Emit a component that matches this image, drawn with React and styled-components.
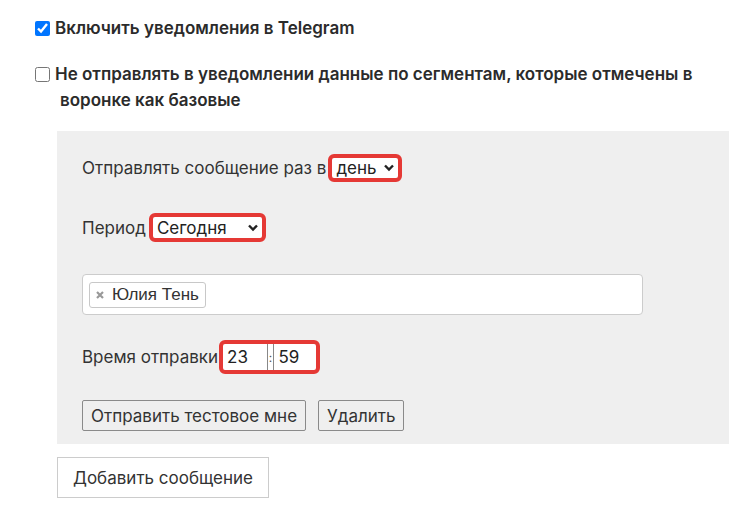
import React from "react";
import styled, { createGlobalStyle } from "styled-components";

const GlobalStyle = createGlobalStyle`
    body {
        margin: 0;
        background: #fff;
        font-family: Inter, "Noto Sans", sans-serif;
        color: #333;
    }
`;

const Page = styled.div`
    padding: 15px 0 0 35px;
    width: 694px;
`;

const CheckRow = styled.label`
    display: flex;
    align-items: flex-start;
    gap: 5px;
    font-size: 17px;
    font-weight: 600;
    line-height: 26px;
    color: #2b2b2b;
    margin-bottom: ${({ $gap }) => $gap || 0}px;
`;

const Box = styled.input`
    width: 15px;
    height: 15px;
    margin: 6px 0 0 0;
    flex: none;
`;

const CheckText = styled.span`
    max-width: 655px;
    padding-left: 5px;
    text-indent: -5px;
`;

const Panel = styled.div`
    margin: 18px 0 0 22px;
    width: 672px;
    background: #efefef;
    padding: 23px 0 13px 25px;
    box-sizing: border-box;
`;

const Row = styled.div`
    display: flex;
    align-items: center;
    gap: ${({ $space }) => $space || 3}px;
    font-size: 17px;
    color: #333;
    margin-bottom: ${({ $gap }) => $gap || 0}px;
`;

const Highlight = styled.div`
    display: flex;
    align-items: center;
    border: 4px solid #e53935;
    border-radius: 6px;
    background: #fff;
    height: ${({ $h }) => $h || 28}px;
    width: ${({ $w }) => $w}px;
    box-sizing: border-box;
    flex: none;
`;

const SelectText = styled.span`
    flex: 1;
    padding-left: 4px;
    font-size: 17px;
    color: #222;
`;

const Chevron = () => (
    <svg width="12" height="12" viewBox="0 0 12 12" style={{ marginRight: 3 }}>
        <path d="M2 3.5 L6 7.5 L10 3.5" fill="none" stroke="#222" strokeWidth="2.4" />
    </svg>
);

const TagsBox = styled.div`
    width: 561px;
    height: 41px;
    box-sizing: border-box;
    background: #fff;
    border: 1px solid #ccc;
    border-radius: 4px;
    padding: 7px 6px;
    display: flex;
    margin-bottom: 25px;
`;

const Tag = styled.div`
    display: flex;
    align-items: center;
    gap: 8px;
    height: 26px;
    box-sizing: border-box;
    border: 1px solid #c8c8c8;
    border-radius: 3px;
    padding: 0 6px 0 6px;
    font-family: "Liberation Sans", Arial, sans-serif;
    font-size: 17px;
    color: #333;
`;

const CrossIcon = () => (
    <svg width="8" height="8" viewBox="0 0 8 8">
        <path d="M1 1 L7 7 M7 1 L1 7" stroke="#999" strokeWidth="2.2" />
    </svg>
);

const TimeField = styled.span`
    width: ${({ $w }) => $w}px;
    padding-left: 4px;
    font-size: 17px;
    color: #222;
    box-sizing: border-box;
`;

const Colon = styled.span`
    width: 6px;
    align-self: stretch;
    border-left: 1px solid #888;
    border-right: 1px solid #888;
    display: flex;
    align-items: center;
    justify-content: center;
    font-size: 12px;
    color: #555;
`;

const Buttons = styled.div`
    display: flex;
    gap: 12px;
`;

const Btn = styled.button`
    font-family: Inter, "Noto Sans", sans-serif;
    font-size: 17px;
    color: #333;
    background: ${({ $white }) => ($white ? "#fff" : "transparent")};
    border: 1px solid ${({ $white }) => ($white ? "#ccc" : "#8a8a8a")};
    border-radius: ${({ $white }) => ($white ? 0 : 2)}px;
    height: ${({ $white }) => ($white ? 41 : 31)}px;
    padding: 0 ${({ $white }) => ($white ? 15 : 8)}px;
    cursor: pointer;
`;

const Footer = styled.div`
    margin: 13px 0 0 22px;
`;

export default function App() {
    return (
        <>
            <GlobalStyle />
            <Page>
                <CheckRow $gap={20}>
                    <Box type="checkbox" defaultChecked />
                    <CheckText>Включить уведомления в Telegram</CheckText>
                </CheckRow>
                <CheckRow>
                    <Box type="checkbox" />
                    <CheckText>
                        Не отправлять в уведомлении данные по сегментам, которые отмечены в воронке как базовые
                    </CheckText>
                </CheckRow>
                <Panel>
                    <Row $gap={31} $space={2}>
                        Отправлять сообщение раз в
                        <Highlight $w={74}>
                            <SelectText>день</SelectText>
                            <Chevron />
                        </Highlight>
                    </Row>
                    <Row $gap={32}>
                        Период
                        <Highlight $w={117} $h={29}>
                            <SelectText>Сегодня</SelectText>
                            <Chevron />
                        </Highlight>
                    </Row>
                    <TagsBox>
                        <Tag>
                            <CrossIcon />
                            Юлия Тень
                        </Tag>
                    </TagsBox>
                    <Row $gap={26} $space={1}>
                        Время отправки
                        <Highlight $w={101} $h={34}>
                            <TimeField $w={46}>23</TimeField>
                            <Colon>:</Colon>
                            <TimeField $w={44}>59</TimeField>
                        </Highlight>
                    </Row>
                    <Buttons>
                        <Btn>Отправить тестовое мне</Btn>
                        <Btn>Удалить</Btn>
                    </Buttons>
                </Panel>
                <Footer>
                    <Btn $white>Добавить сообщение</Btn>
                </Footer>
            </Page>
        </>
    );
}
